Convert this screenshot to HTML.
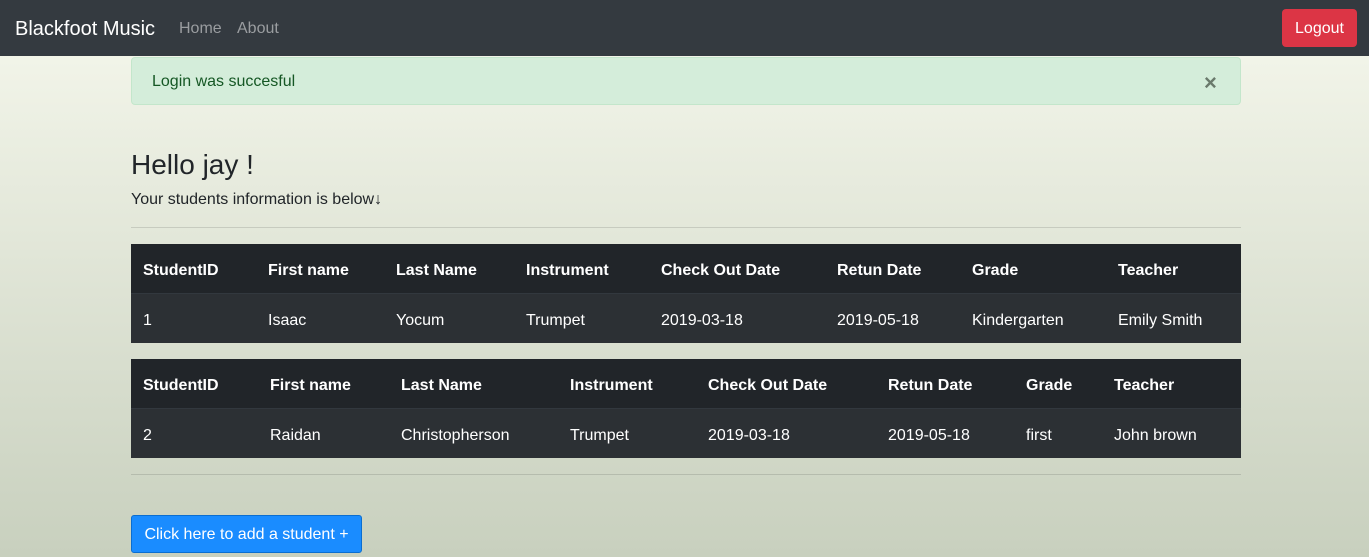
<!DOCTYPE html>
<html><head><style>
*{box-sizing:border-box;margin:0;padding:0}
body{width:1369px;height:557px;overflow:hidden;font-family:"Liberation Sans",sans-serif;background:linear-gradient(#f6f8ed,#c8d0be);position:relative;color:#212529}
.nav{position:absolute;left:0;top:0;width:1369px;height:56px;background:#343a40}
.a{position:absolute;white-space:nowrap}
.t{position:absolute;left:131px;width:1110px;color:#fff;font-size:16px}
.h{background:#212529;height:50px;font-weight:bold;border-bottom:1px solid #32383e}
.b{background:#2c3034;height:49px}
.t span{position:absolute;top:50%;transform:translateY(-40%)}
hr{position:absolute;left:131px;width:1110px;border:0;border-top:1px solid rgba(0,0,0,.12)}
</style></head><body>
<div class="nav"></div>
<div class="a" style="left:15px;top:18px;color:#fff;font-size:20px">Blackfoot Music</div>
<div class="a" style="left:179px;top:20px;color:#9a9da0;font-size:16px">Home</div>
<div class="a" style="left:237px;top:20px;color:#9a9da0;font-size:16px">About</div>
<div class="a" style="left:1282px;top:9px;width:75px;height:38px;background:#dc3545;border-radius:4px;color:#fff;font-size:16px;text-align:center;line-height:40px">Logout</div>
<div class="a" style="left:131px;top:57px;width:1110px;height:48px;background:#d4edda;border:1px solid #c3e6cb;border-radius:4px"></div>
<div class="a" style="left:152px;top:73px;color:#155724;font-size:16px">Login was succesful</div>
<div class="a" style="left:1204px;top:70px;color:#6a7a6c;font-size:22px;font-weight:bold">×</div>
<div class="a" style="left:131px;top:149px;font-size:28px">Hello jay !</div>
<div class="a" style="left:131px;top:191px;font-size:16px">Your students information is below↓</div>
<hr style="top:227px">
<div class="t h" style="top:244px"><span style="left:12px">StudentID</span><span style="left:137px">First name</span><span style="left:265px">Last Name</span><span style="left:395px">Instrument</span><span style="left:530px">Check Out Date</span><span style="left:706px">Retun Date</span><span style="left:841px">Grade</span><span style="left:987px">Teacher</span></div>
<div class="t b" style="top:294px"><span style="left:12px">1</span><span style="left:137px">Isaac</span><span style="left:265px">Yocum</span><span style="left:395px">Trumpet</span><span style="left:530px">2019-03-18</span><span style="left:706px">2019-05-18</span><span style="left:841px">Kindergarten</span><span style="left:987px">Emily Smith</span></div>
<div class="t h" style="top:359px"><span style="left:12px">StudentID</span><span style="left:139px">First name</span><span style="left:270px">Last Name</span><span style="left:439px">Instrument</span><span style="left:577px">Check Out Date</span><span style="left:757px">Retun Date</span><span style="left:895px">Grade</span><span style="left:983px">Teacher</span></div>
<div class="t b" style="top:409px"><span style="left:12px">2</span><span style="left:139px">Raidan</span><span style="left:270px">Christopherson</span><span style="left:439px">Trumpet</span><span style="left:577px">2019-03-18</span><span style="left:757px">2019-05-18</span><span style="left:895px">first</span><span style="left:983px">John brown</span></div>
<hr style="top:474px">
<div class="a" style="left:131px;top:515px;width:231px;height:38px;background:#1a8cff;border:1px solid #0b6ed0;border-radius:3px;color:#fff;font-size:16px;text-align:center;line-height:38px">Click here to add a student +</div>
</body></html>
